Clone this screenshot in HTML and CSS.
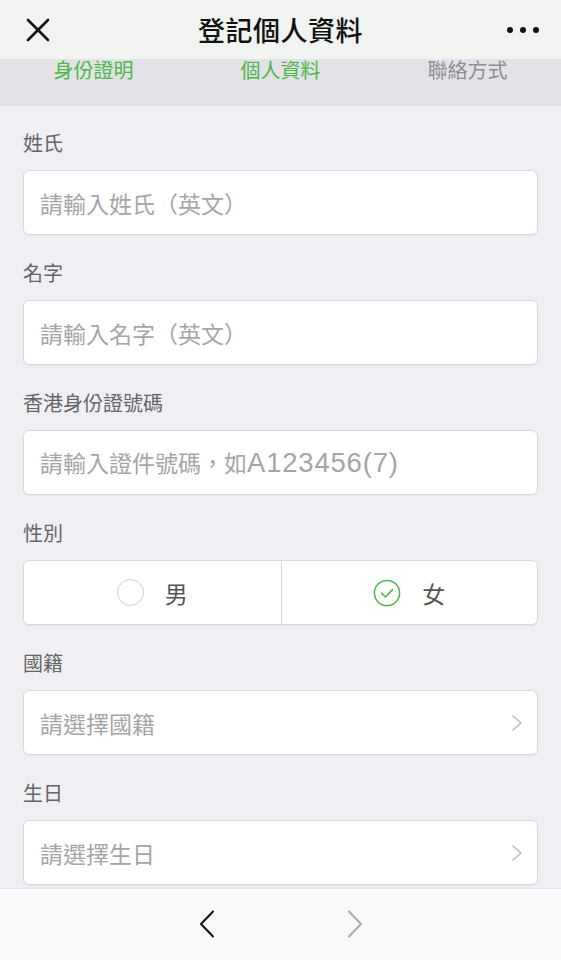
FILE: index.html
```html
<!DOCTYPE html>
<html lang="zh-Hant">
<head>
<meta charset="utf-8">
<title>登記個人資料</title>
<link rel="stylesheet" href="styles.css">
</head>
<body>
<div class="app">
  <header class="topbar">
    <div class="top-left">
      <svg class="icon-close" width="24" height="24" viewBox="0 0 24 24"><path d="M2 2 L22 22 M22 2 L2 22" stroke="#111" stroke-width="2.6" stroke-linecap="round" fill="none"/></svg>
    </div>
    <h1 class="title">登記個人資料</h1>
    <div class="top-right">
      <span class="dot"></span><span class="dot"></span><span class="dot"></span>
    </div>
  </header>
  <nav class="tabs">
    <div class="tab done">身份證明</div>
    <div class="tab active">個人資料</div>
    <div class="tab">聯絡方式</div>
  </nav>
  <main class="form">
    <section class="field">
      <div class="label">姓氏</div>
      <div class="box"><span class="ph">請輸入姓氏（英文）</span></div>
    </section>
    <section class="field">
      <div class="label">名字</div>
      <div class="box"><span class="ph">請輸入名字（英文）</span></div>
    </section>
    <section class="field">
      <div class="label">香港身份證號碼</div>
      <div class="box"><span class="ph">請輸入證件號碼，如<span class="latin">A123456(7)</span></span></div>
    </section>
    <section class="field">
      <div class="label">性別</div>
      <div class="box seg">
        <div class="opt">
          <span class="radio"></span><span class="opt-text">男</span>
        </div>
        <div class="opt opt-right">
          <svg class="radio-on" width="28" height="28" viewBox="0 0 28 28"><circle cx="14" cy="14" r="12.6" fill="none" stroke="#4cb748" stroke-width="1.5"/><path d="M8.6 14.2 L12.4 18 L19.6 10.6" fill="none" stroke="#4cb748" stroke-width="1.6" stroke-linecap="round" stroke-linejoin="round"/></svg>
          <span class="opt-text">女</span>
        </div>
      </div>
    </section>
    <section class="field">
      <div class="label">國籍</div>
      <div class="box select"><span class="ph">請選擇國籍</span>
        <svg class="chev" width="12" height="18" viewBox="0 0 12 18"><path d="M2 2 L10 9 L2 16" fill="none" stroke="#bdbdbd" stroke-width="1.6" stroke-linecap="round" stroke-linejoin="round"/></svg>
      </div>
    </section>
    <section class="field">
      <div class="label">生日</div>
      <div class="box select"><span class="ph">請選擇生日</span>
        <svg class="chev" width="12" height="18" viewBox="0 0 12 18"><path d="M2 2 L10 9 L2 16" fill="none" stroke="#bdbdbd" stroke-width="1.6" stroke-linecap="round" stroke-linejoin="round"/></svg>
      </div>
    </section>
  </main>
  <footer class="bottombar">
    <svg class="nav-arrow" width="16" height="28" viewBox="0 0 16 28"><path d="M14 1.5 L2 14 L14 26.5" fill="none" stroke="#111" stroke-width="2" stroke-linecap="round" stroke-linejoin="round"/></svg>
    <svg class="nav-arrow" width="16" height="28" viewBox="0 0 16 28"><path d="M2 1.5 L14 14 L2 26.5" fill="none" stroke="#a9a9a9" stroke-width="2" stroke-linecap="round" stroke-linejoin="round"/></svg>
  </footer>
</div>
</body>
</html>
```
FILE: styles.css
```css
* { box-sizing: border-box; }
html, body {
  margin: 0;
  padding: 0;
  height: 100%;
}
body {
  font-family: "Noto Sans CJK TC", "Noto Sans CJK SC", "Noto Sans", sans-serif;
  background: #efeff4;
  color: #111;
}
.app {
  width: 561px;
  height: 960px;
  display: flex;
  flex-direction: column;
  overflow: hidden;
}
.topbar {
  height: 59px;
  flex: 0 0 59px;
  background: #f1f3f1;
  display: grid;
  grid-template-columns: 120px 1fr 120px;
  align-items: center;
}
.top-left {
  padding-left: 26px;
  display: flex;
  align-items: center;
  padding-top: 1px;
}
.title {
  margin: 0;
  text-align: center;
  font-size: 27px;
  font-weight: 500;
  line-height: 32px;
  color: #111;
  letter-spacing: 0.5px;
}
.top-right {
  display: flex;
  justify-content: flex-end;
  gap: 7px;
  padding-right: 22px;
  padding-top: 1px;
}
.dot {
  width: 6px;
  height: 6px;
  border-radius: 50%;
  background: #111;
}
.tabs {
  height: 47px;
  flex: 0 0 47px;
  background: #e3e2e7;
  display: grid;
  grid-template-columns: 1fr 1fr 1fr;
  align-items: start;
}
.tab {
  text-align: center;
  font-size: 20px;
  line-height: 20px;
  color: #8e8e93;
  padding-top: 1px;
}
.tab.done, .tab.active {
  color: #4cb748;
}
.form {
  flex: 1 1 auto;
  overflow: hidden;
  padding: 0 23px;
}
.field {
  padding-top: 26px;
}
.field:first-child {
  padding-top: 25px;
}
.label {
  font-size: 20px;
  line-height: 24px;
  color: #666;
  margin-bottom: 15px;
}
.box {
  height: 65px;
  background: #fff;
  border: 1px solid #dadade;
  border-radius: 6px;
  box-shadow: 0 1px 1px rgba(0,0,0,0.04);
  display: flex;
  align-items: center;
  padding: 0 16px;
}
.ph {
  font-size: 23px;
  color: #a6a6a6;
  line-height: 28px;
  white-space: nowrap;
}
.latin {
  font-family: "Liberation Sans", Arial, sans-serif;
  font-size: 27.5px;
  letter-spacing: 0.8px;
}
.seg {
  padding: 0;
  display: grid;
  grid-template-columns: 1fr 1fr;
  align-items: stretch;
}
.opt {
  display: flex;
  align-items: center;
  justify-content: center;
  gap: 21px;
}
.opt-right {
  border-left: 1px solid #d6d6da;
}
.radio {
  width: 27px;
  height: 27px;
  border-radius: 50%;
  border: 1.5px solid #cfcfcf;
}
.opt-text {
  font-size: 23px;
  color: #555;
  line-height: 28px;
}
.select {
  justify-content: space-between;
  padding-right: 14px;
}
.bottombar {
  height: 72px;
  flex: 0 0 72px;
  background: #f8f9fa;
  border-top: 1px solid #e2e2e6;
  display: flex;
  align-items: center;
  justify-content: center;
  gap: 132px;
  padding-bottom: 2px;
}
```
